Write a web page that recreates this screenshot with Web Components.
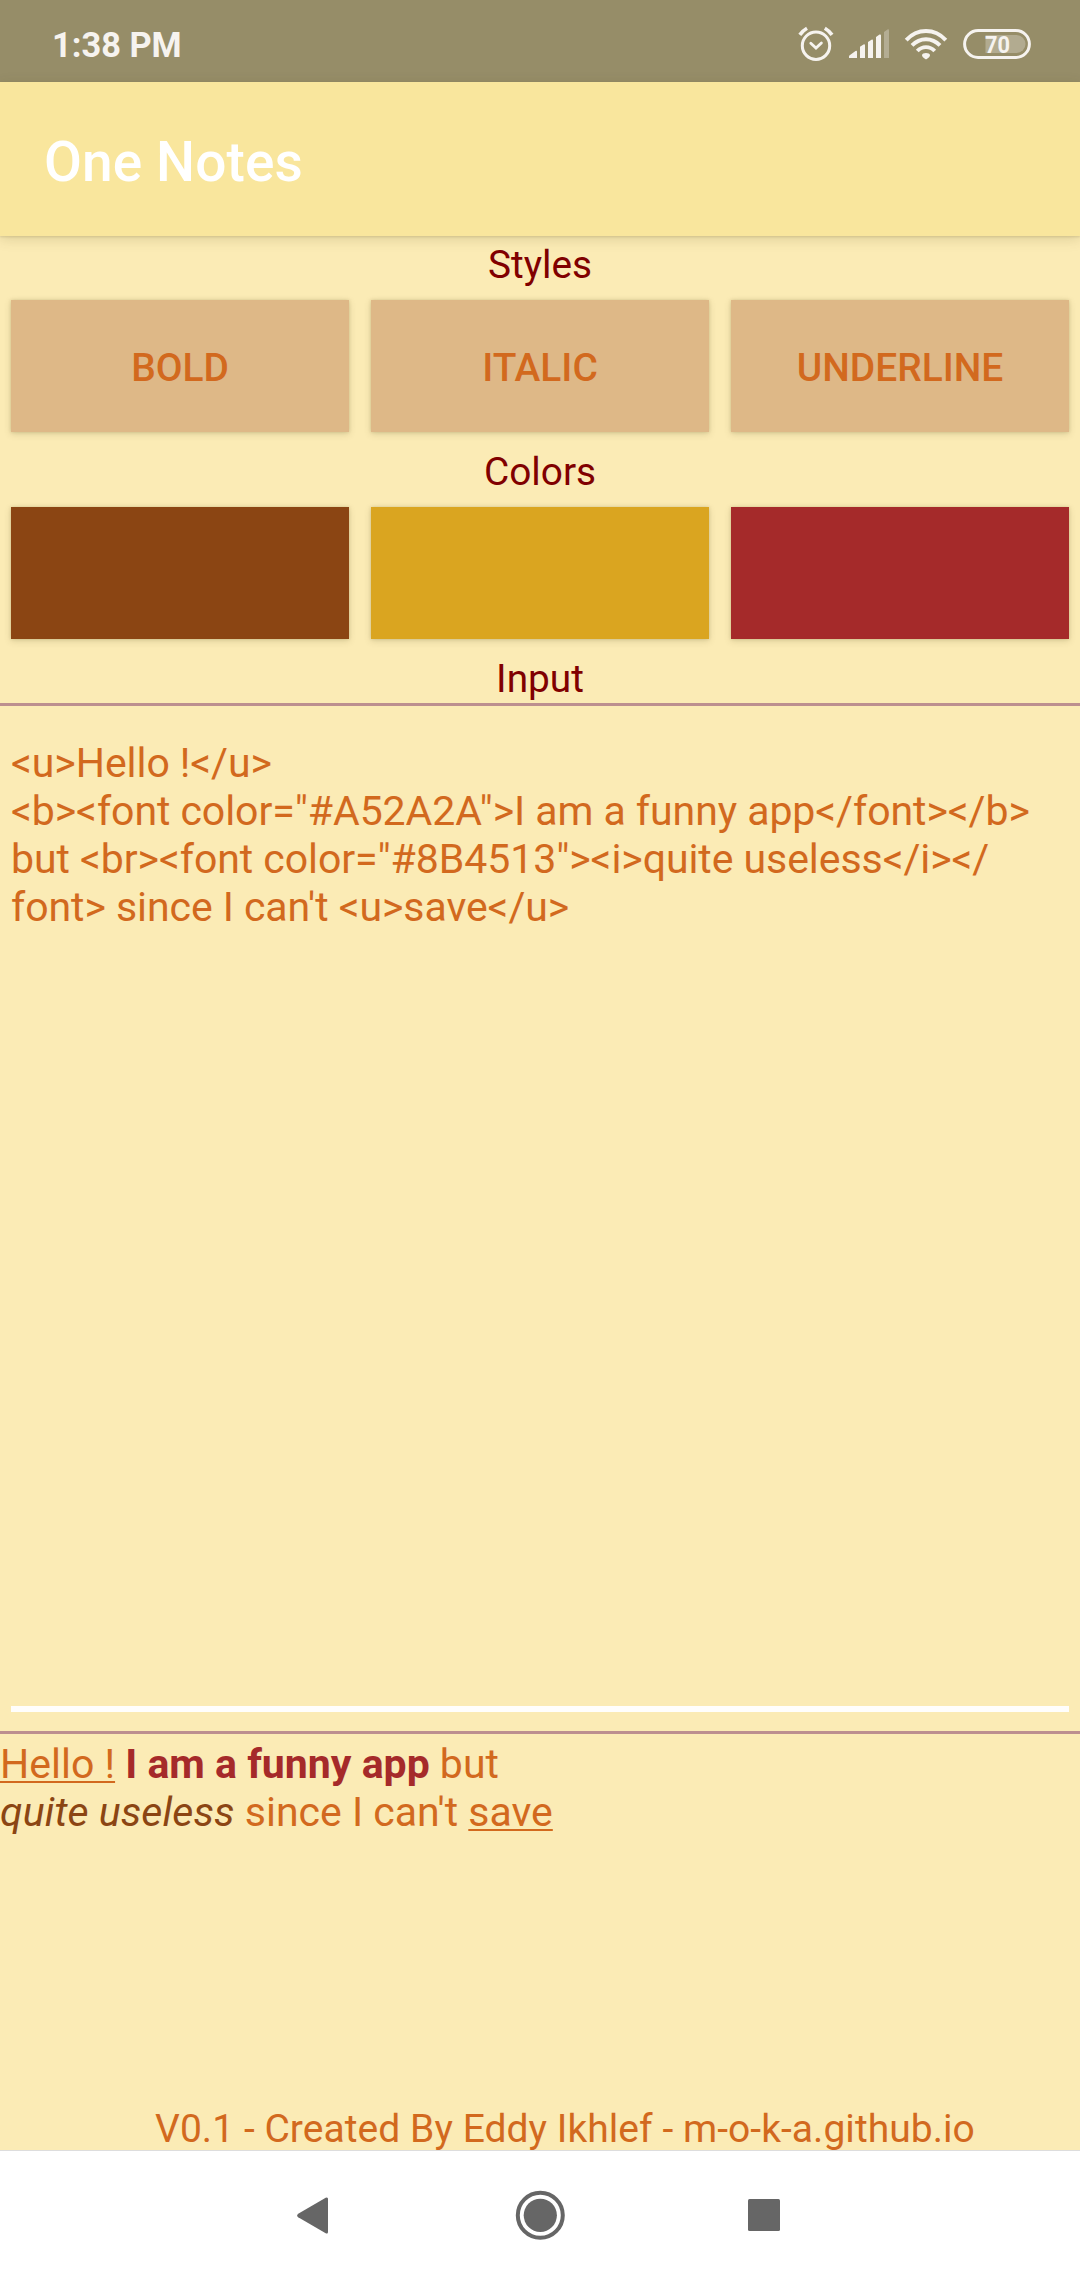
<!DOCTYPE html>
<html lang="en">
<head>
<meta charset="utf-8">
<title>One Notes</title>
<style>
html,body{margin:0;padding:0}
body{width:1080px;height:2280px;background:#fbebb5;font-family:Roboto,sans-serif;overflow:hidden}
</style>
</head>
<body>
<notes-app></notes-app>
<script>
const define = (name, html) => customElements.define(name, class extends HTMLElement {
  constructor() {
    super();
    const t = document.createElement('template');
    t.innerHTML = html;
    this.attachShadow({ mode: 'open' }).append(t.content.cloneNode(true));
  }
});

define('status-bar', `
<style>
:host{display:flex;align-items:center;height:82px;box-sizing:border-box;padding:0 49px 0 52px;background:#968d68;color:#f6f3ef}
.time{flex:1;font-size:34.4px;font-weight:700;line-height:41px;padding-top:9px}
svg{display:block;width:240px;height:70px}
text{font-family:Roboto,sans-serif;font-weight:700;font-size:24px}
</style>
<div class="time">1:38 PM</div>
<svg viewBox="791 6 240 70" fill="none" stroke="#f6f3ef">
  <g stroke-width="3">
    <circle cx="816" cy="45.7" r="13.7"/>
    <path d="M810.8 43.2l5.2 4.9 5.4-5.2" stroke-linecap="round" stroke-width="2.8"/>
    <path d="M799.8 34.9q3-4.2 7.2-6.6M824.8 28.3q4.200 2.400 7.200 6.600" stroke-width="3.6"/>
  </g>
  <g fill="#f6f3ef" stroke="none">
    <path d="M849 57.900v-1.500q0-.7.7-1.200l5.800-4.200q1.500-.8 1.500.8v6.100zM860 57.900v-11.200l3.500-2.200q1.500-.6 1.500 1v12.400zM868 57.900v-15.900l3.500-2.300q1.500-.6 1.500 1v17.200zM876 57.900v-20.900l3.500-2.400q1.500-.6 1.500 1v22.300z"/>
    <path opacity=".32" d="M884 57.900v-26l3.500-2.500q1.500-.6 1.500 1v27.500z"/>
    <path d="M926 59.2c-1.200 0-4-2.600-4-4s2-2.300 4-2.300 4 .9 4 2.300-2.800 4-4 4z"/>
  </g>
  <g stroke-width="3.900">
    <path d="M906.200 40.100Q914.500 31 926 31t19.800 9.100"/>
    <path d="M912 45.400Q918 39.200 926 39.200t14 6.200"/>
    <path d="M917.300 51Q921 47.100 926 47.100t8.700 3.900"/>
  </g>
  <path fill="#f6f3ef" fill-opacity=".3" stroke="none" d="M985.500 35h31a8.800 8.800 0 0 1 0 18h-31z"/>
  <rect x="964.600" y="30.500" width="64.800" height="27" rx="13.500" stroke-width="3"/>
  <text x="997.500" y="52.900" text-anchor="middle" fill="#f6f3ef" stroke="none" textLength="25" lengthAdjust="spacingAndGlyphs">70</text>
</svg>`);

define('title-bar', `
<style>
:host{display:flex;align-items:center;height:154px;box-sizing:border-box;padding:6px 44px 0;background:#f9e69d;color:#fff;font-size:55px;letter-spacing:.12px;font-weight:500;line-height:64px;position:relative;z-index:1;box-shadow:0 3px 12px rgba(80,70,20,.17),0 1px 2px rgba(80,70,20,.15)}
</style><slot></slot>`);

define('section-label', `
<style>
:host{display:block;height:53px;box-sizing:border-box;padding:6px 0 0;color:maroon;font-size:38.8px;line-height:45px;text-align:center}
</style><slot></slot>`);

define('button-row', `
<style>
:host{display:grid;grid-template-columns:repeat(3,1fr);gap:22px;padding:11px}
</style><slot></slot>`);

define('note-button', `
<style>
:host{display:block}
button{display:flex;align-items:center;justify-content:center;width:100%;height:132px;border:0;padding:3px 0 0;background:var(--fill,#deb887);color:#d2691e;font:500 38.9px/45px Roboto,sans-serif;box-shadow:0 2px 7px rgba(80,70,20,.18),0 0 3px rgba(80,70,20,.18)}
</style><button><slot></slot></button>`);

define('note-input', `
<style>
:host{display:flex;flex-direction:column;height:1031px;box-sizing:border-box;border-top:3px solid #bc8f8f;border-bottom:3px solid #bc8f8f;padding:0 11px 19px;color:#d2691e;font-size:41px;letter-spacing:-.06px;line-height:48px}
.text{flex:1;padding-top:33px;border-bottom:6px solid #fffefc;white-space:pre}
</style><div class="text"><slot></slot></div>`);

define('note-output', `
<style>
:host{display:block;flex:1;padding-top:6px;color:#d2691e;font-size:41px;line-height:48px}
u{text-decoration-thickness:2px;text-underline-offset:3px;text-decoration-skip-ink:none}
b{color:#a52a2a}
i{color:#8b4513;letter-spacing:.07px}
</style><u>Hello !</u> <b>I am a funny app</b> but<br><i>quite useless</i> since I can't <u>save</u>`);

define('credit-line', `
<style>
:host{display:block;height:44px;padding-left:155px;color:#d2691e;font-size:39px;letter-spacing:.05px;line-height:47px;white-space:nowrap}
</style><slot></slot>`);

define('nav-bar', `
<style>
:host{display:block;height:130px;box-sizing:border-box;background:#fff;border-top:1px solid #ddd;position:relative}
svg{display:block;width:1080px;height:129px}
</style>
<svg viewBox="0 2151 1080 129" fill="#666">
  <path d="M298.200 2213.700l27.500-16q2.300-1 2.300 1.300v33q0 2.300-2.300 1.300l-27.500-16q-2.200-1.800 0-3.600z"/>
  <circle cx="540.300" cy="2215.300" r="16.600"/>
  <circle cx="540.300" cy="2215.300" r="22.500" fill="none" stroke="#666" stroke-width="4"/>
  <rect x="748" y="2199" width="32" height="32" rx="1.500"/>
</svg>`);

define('notes-app', `
<style>
:host{display:flex;flex-direction:column;width:1080px;height:2280px}
</style>
<status-bar></status-bar>
<title-bar>One Notes</title-bar>
<section-label>Styles</section-label>
<button-row><note-button>BOLD</note-button><note-button>ITALIC</note-button><note-button>UNDERLINE</note-button></button-row>
<section-label>Colors</section-label>
<button-row><note-button style="--fill:#8b4513"></note-button><note-button style="--fill:#daa520"></note-button><note-button style="--fill:#a52a2a"></note-button></button-row>
<section-label>Input</section-label>
<note-input>&lt;u&gt;Hello !&lt;/u&gt;
&lt;b&gt;&lt;font color="#A52A2A"&gt;I am a funny app&lt;/font&gt;&lt;/b&gt;
but &lt;br&gt;&lt;font color="#8B4513"&gt;&lt;i&gt;quite useless&lt;/i&gt;&lt;/
font&gt; since I can't &lt;u&gt;save&lt;/u&gt;</note-input>
<note-output></note-output>
<credit-line>V0.1 - Created By Eddy Ikhlef - m-o-k-a.github.io</credit-line>
<nav-bar></nav-bar>`);
</script>
</body>
</html>
